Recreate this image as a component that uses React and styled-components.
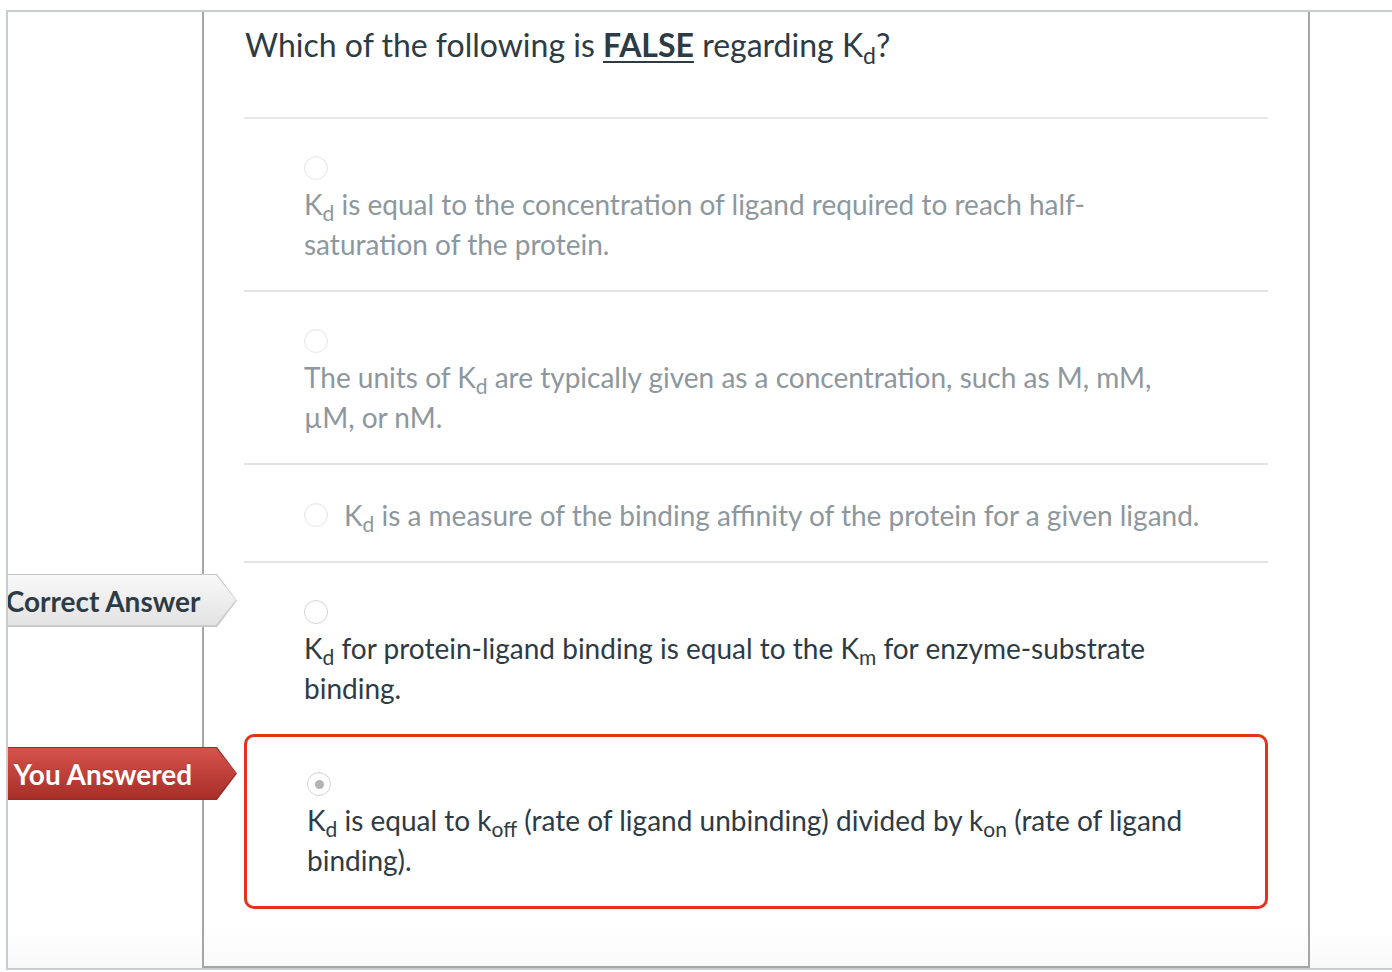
import React from 'react'
import styled, {createGlobalStyle} from 'styled-components'

const GlobalStyle = createGlobalStyle`
    html, body {
        margin: 0;
        padding: 0;
        background: #fff;
        overflow: hidden;
    }
    body {
        font-family: Lato, "Helvetica Neue", Arial, sans-serif;
        color: #2d3b45;
    }
`

const answers = [
    {
        id: 1,
        faded: true,
        lines: [
            <>K<sub>d</sub> is equal to the concentration of ligand required to reach half-</>,
            <>saturation of the protein.</>,
        ],
    },
    {
        id: 2,
        faded: true,
        lines: [
            <>The units of K<sub>d</sub> are typically given as a concentration, such as M, mM,</>,
            <>µM, or nM.</>,
        ],
    },
    {
        id: 3,
        faded: true,
        inline: true,
        lines: [<>K<sub>d</sub> is a measure of the binding affinity of the protein for a given ligand.</>],
    },
    {
        id: 4,
        label: 'correct',
        noRule: true,
        lines: [
            <>K<sub>d</sub> for protein-ligand binding is equal to the K<sub>m</sub> for enzyme-substrate</>,
            <>binding.</>,
        ],
    },
    {
        id: 5,
        label: 'answered',
        selected: true,
        lines: [
            <>K<sub>d</sub> is equal to k<sub>off</sub> (rate of ligand unbinding) divided by k<sub>on</sub> (rate of ligand</>,
            <>binding).</>,
        ],
    },
]

export default function App() {
    return (
        <>
            <GlobalStyle />
            <Frame>
                <Side />
                <Panel>
                    <Question>
                        Which of the following is <strong>FALSE</strong> regarding K<sub>d</sub>?
                    </Question>
                    {answers.map(a => (
                        <Answer key={a.id} selected={a.selected} noRule={a.noRule}>
                            {a.label && (
                                <Flag variant={a.label} selected={a.selected}>
                                    <span>{a.label === 'correct' ? 'Correct Answer' : 'You Answered'}</span>
                                </Flag>
                            )}
                            <Choice inline={a.inline}>
                                <Radio checked={a.selected} faded={a.faded} inline={a.inline} />
                                <AnswerText faded={a.faded}>
                                    {a.lines.map((l, i) => (
                                        <div key={i}>{l}</div>
                                    ))}
                                </AnswerText>
                            </Choice>
                        </Answer>
                    ))}
                </Panel>
                <Side />
            </Frame>
        </>
    )
}

const Frame = styled.div`
    margin: 10px 0 0 6px;
    width: 1420px;
    height: 960px;
    box-sizing: border-box;
    border: 2px solid #c7cdd1;
    display: grid;
    grid-template-columns: 194px 1108px 1fr;
    overflow: hidden;
    background: linear-gradient(to bottom, #fff calc(100% - 40px), #f9f9f9);
`
const Side = styled.div``

const Panel = styled.div`
    position: relative;
    box-sizing: border-box;
    border: 2px solid #a6a6a6;
    border-top: 0;
    padding: 0 40px;
    background: linear-gradient(to bottom, #fff calc(100% - 40px), #fafafa);
`
const Question = styled.div`
    padding: 13px 0 52px 1px;
    font-size: 32px;
    line-height: 40px;
    color: #2d3b45;
    border-bottom: 2px solid #e8e8e8;
    & strong {
        font-weight: 700;
        text-decoration: underline;
        text-decoration-thickness: 2px;
        text-underline-offset: 4px;
    }
    & sub {
        font-size: 0.72em;
        line-height: 0;
        vertical-align: -0.3em;
    }
`
const Answer = styled.div`
    position: relative;
    padding: 30px 60px 26px 60px;
    border-bottom: ${p => p.noRule || p.selected ? '0' : '2px solid #e3e3e3'};
    ${p => p.selected && `
        border: 3px solid #e5321f;
        border-radius: 10px;
        padding-top: 28px;
    `}
`
const Choice = styled.div`
    display: flex;
    flex-direction: ${p => p.inline ? 'row' : 'column'};
    align-items: ${p => p.inline ? 'center' : 'flex-start'};
    gap: ${p => p.inline ? '16px' : '4px'};
`
const Radio = styled.span`
    flex: none;
    box-sizing: border-box;
    width: 24px;
    height: 24px;
    margin-top: ${p => p.inline ? '0' : '7px'};
    border-radius: 50%;
    border: 1px solid ${p => p.faded ? '#e6e6e6' : '#d6d6d6'};
    background: #fff;
    box-shadow: inset 0 1px 2px rgba(0, 0, 0, 0.04);
    display: flex;
    align-items: center;
    justify-content: center;
    &::after {
        content: '';
        display: ${p => p.checked ? 'block' : 'none'};
        width: 9px;
        height: 9px;
        border-radius: 50%;
        background: #b4b4b4;
    }
`
const AnswerText = styled.div`
    font-size: 28px;
    line-height: 40px;
    white-space: nowrap;
    color: ${p => p.faded ? '#8d979e' : '#2d3b45'};
    & sub {
        font-size: 0.75em;
        line-height: 0;
        vertical-align: -0.3em;
    }
`
const Flag = styled.div`
    position: absolute;
    top: ${p => p.selected ? '10px' : '11px'};
    left: ${p => p.selected ? '-252px' : '-249px'};
    width: 242px;
    height: 53px;
    clip-path: polygon(0 0, calc(100% - 20px) 0, 100% 50%, calc(100% - 20px) 100%, 0 100%);
    background: ${p => p.variant === 'correct' ? '#c9c9c9' : '#9e2b25'};
    z-index: 2;
    &::before {
        content: '';
        position: absolute;
        inset: 1px 1px 2px 0;
        clip-path: polygon(0 0, calc(100% - 20px) 0, 100% 50%, calc(100% - 20px) 100%, 0 100%);
        background: ${p => p.variant === 'correct'
            ? 'linear-gradient(to bottom, #f8f8f8, #e3e3e3)'
            : 'linear-gradient(to bottom, #d6534b, #a82f29)'};
    }
    & > span {
        position: relative;
        display: flex;
        align-items: center;
        justify-content: center;
        height: 100%;
        padding-right: 26px;
        box-sizing: border-box;
        font-size: 28px;
        font-weight: 700;
        white-space: nowrap;
        color: ${p => p.variant === 'correct' ? '#2d3b45' : '#fff'};
        text-shadow: ${p => p.variant === 'correct' ? 'none' : '0 -1px 0 rgba(0,0,0,0.15)'};
    }
`
